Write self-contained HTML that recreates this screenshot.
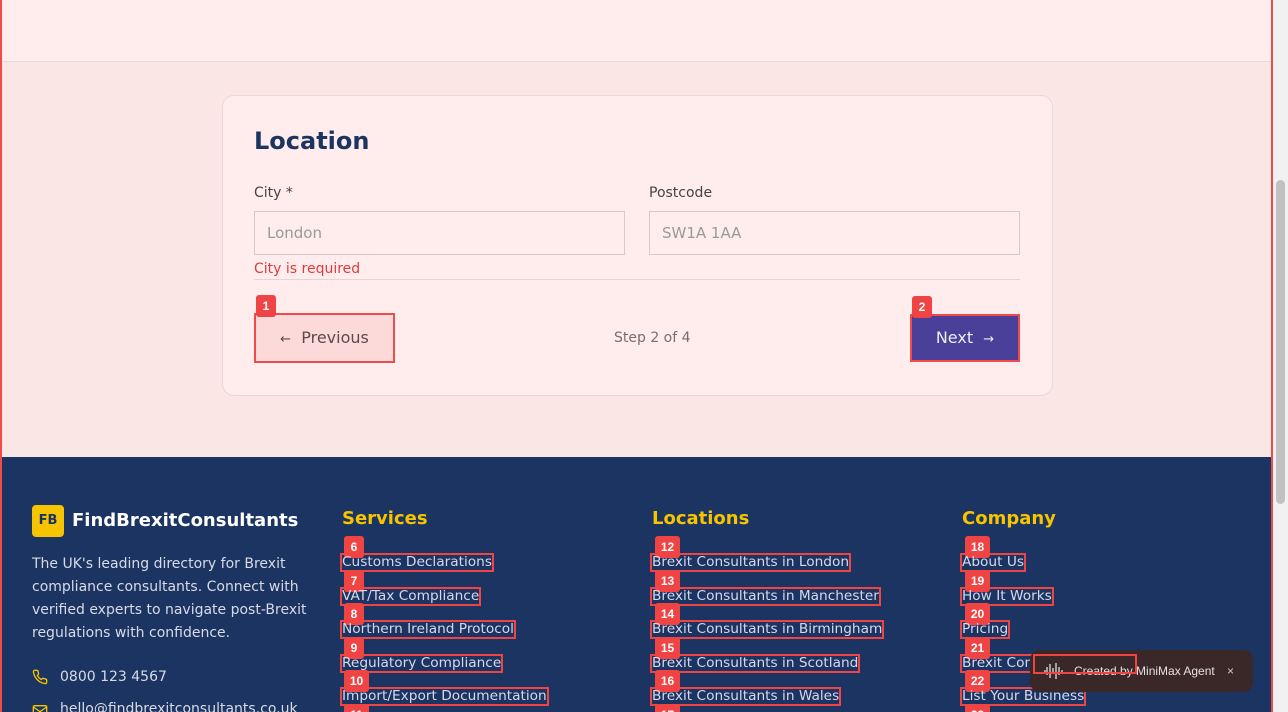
<!DOCTYPE html>
<html><head><style>
*{box-sizing:border-box;margin:0;padding:0}
html,body{width:1288px;height:712px;overflow:hidden}
body{font-family:"DejaVu Sans","Liberation Sans",sans-serif;background:#fbe6e6;position:relative}
.abs{position:absolute}
.top{left:0;top:0;width:1273px;height:62px;background:#ffecec;border-bottom:1px solid #f0d6d6}
.frame{left:0;top:0;width:1273px;height:712px;border-left:2px solid #f04a4a;border-right:2px solid #f04a4a;pointer-events:none;z-index:9}
.sb{left:1273px;top:0;width:15px;height:712px;background:#f1f1f1}
.thumb{left:1276px;top:180px;width:9px;height:324px;background:#c1c1c1;border-radius:5px}
.card{left:222px;top:95px;width:831px;height:301px;background:#ffecec;border:1px solid #efd5d5;border-radius:12px}
h2{position:absolute;left:254px;top:127px;font-size:24px;color:#1b3461;font-weight:bold}
.lbl{font-size:14px;color:#444}
.inp{height:44px;width:371px;border:1px solid #d6c9c9;background:#ffecec;font-size:15px;color:#9a9a9a;padding:12px 12px}
.badge{background:#f04444;color:#fff;font-size:12px;font-weight:bold;border-radius:3px;text-align:center;line-height:22px;height:22px;font-family:"Liberation Sans",sans-serif}
.footer{left:0;top:457px;width:1273px;height:255px;background:#1b3461;overflow:hidden}
.fh{font-size:18px;font-weight:bold;color:#f6c400}
.lnk{font-size:13.7px;color:#d8d8ec;outline:2px solid #f04444;line-height:15px;padding:0;white-space:nowrap}
.ft{color:#d8dbe6;font-size:14px}
</style></head><body>
<div class="abs top"></div>
<div class="abs card"></div>
<h2>Location</h2>
<div class="abs lbl" style="left:254px;top:185px">City *</div>
<div class="abs lbl" style="left:649px;top:185px">Postcode</div>
<div class="abs inp" style="left:254px;top:211px">London</div>
<div class="abs inp" style="left:649px;top:211px">SW1A 1AA</div>
<div class="abs" style="left:254px;top:261px;font-size:14px;color:#e03b3b">City is required</div>
<div class="abs" style="left:254px;top:279px;width:766px;height:1px;background:#e8d2d2"></div>
<div class="abs" style="left:254px;top:313px;width:141px;height:50px;background:#fddada;border:2px solid #f04a4a;color:#5a4a4a;font-size:16px;line-height:46px;text-align:center"><span style="font-size:13px">←</span>&nbsp; Previous</div>
<div class="abs badge" style="left:256px;top:295px;width:20px">1</div>
<div class="abs" style="left:614px;top:330px;font-size:14px;color:#7a6d6d">Step 2 of 4</div>
<div class="abs" style="left:910px;top:314px;width:110px;height:48px;background:#4a3f99;border:2px solid #f04a4a;color:#eee;font-size:16px;line-height:44px;text-align:center">Next &nbsp;<span style="font-size:13px">→</span></div>
<div class="abs badge" style="left:912px;top:296px;width:20px">2</div>

<div class="abs footer">
<div class="abs" style="left:32px;top:48px;width:32px;height:32px;background:#f6c400;border-radius:4px;color:#1b3461;font-weight:bold;font-size:13px;line-height:32px;text-align:center">FB</div>
<div class="abs" style="left:72px;top:53px;font-size:18px;font-weight:bold;color:#fff">FindBrexitConsultants</div>
<div class="abs ft" style="left:32px;top:96px;width:290px;line-height:23px">The UK's leading directory for Brexit compliance consultants. Connect with verified experts to navigate post-Brexit regulations with confidence.</div>
<svg class="abs" style="left:32px;top:212px" width="16" height="16" viewBox="0 0 24 24" fill="none" stroke="#f6c400" stroke-width="2"><path d="M22 16.9v3a2 2 0 0 1-2.2 2 19.8 19.8 0 0 1-8.6-3.1 19.5 19.5 0 0 1-6-6A19.8 19.8 0 0 1 2.1 4.2 2 2 0 0 1 4.1 2h3a2 2 0 0 1 2 1.7c.1 1 .4 1.9.7 2.8a2 2 0 0 1-.5 2.1L8 9.9a16 16 0 0 0 6 6l1.3-1.3a2 2 0 0 1 2.1-.4c.9.3 1.8.6 2.8.7a2 2 0 0 1 1.7 2z"/></svg>
<div class="abs ft" style="left:60px;top:212px">0800 123 4567</div>
<svg class="abs" style="left:32px;top:246px" width="16" height="16" viewBox="0 0 24 24" fill="none" stroke="#f6c400" stroke-width="2"><rect x="2" y="4" width="20" height="16" rx="2"/><path d="M2 6l10 7 10-7"/></svg>
<div class="abs ft" style="left:60px;top:244px">hello@findbrexitconsultants.co.uk</div>
</div>

<div class="abs fh" style="left:342px;top:508px">Services</div>
<div class="abs fh" style="left:652px;top:508px">Locations</div>
<div class="abs fh" style="left:962px;top:508px">Company</div>

<div class="abs badge" style="left:344px;top:536px;width:20px">6</div><div class="abs lnk" style="left:342px;top:555px">Customs Declarations</div>
<div class="abs badge" style="left:344px;top:570px;width:20px">7</div><div class="abs lnk" style="left:342px;top:589px">VAT/Tax Compliance</div>
<div class="abs badge" style="left:344px;top:603px;width:20px">8</div><div class="abs lnk" style="left:342px;top:622px">Northern Ireland Protocol</div>
<div class="abs badge" style="left:344px;top:637px;width:20px">9</div><div class="abs lnk" style="left:342px;top:656px">Regulatory Compliance</div>
<div class="abs badge" style="left:344px;top:670px;width:25px">10</div><div class="abs lnk" style="left:342px;top:689px">Import/Export Documentation</div>
<div class="abs badge" style="left:344px;top:704px;width:25px">11</div>

<div class="abs badge" style="left:655px;top:536px;width:25px">12</div><div class="abs lnk" style="left:652px;top:555px">Brexit Consultants in London</div>
<div class="abs badge" style="left:655px;top:570px;width:25px">13</div><div class="abs lnk" style="left:652px;top:589px">Brexit Consultants in Manchester</div>
<div class="abs badge" style="left:655px;top:603px;width:25px">14</div><div class="abs lnk" style="left:652px;top:622px">Brexit Consultants in Birmingham</div>
<div class="abs badge" style="left:655px;top:637px;width:25px">15</div><div class="abs lnk" style="left:652px;top:656px">Brexit Consultants in Scotland</div>
<div class="abs badge" style="left:655px;top:670px;width:25px">16</div><div class="abs lnk" style="left:652px;top:689px">Brexit Consultants in Wales</div>
<div class="abs badge" style="left:655px;top:704px;width:25px">17</div>

<div class="abs badge" style="left:965px;top:536px;width:25px">18</div><div class="abs lnk" style="left:962px;top:555px">About Us</div>
<div class="abs badge" style="left:965px;top:570px;width:25px">19</div><div class="abs lnk" style="left:962px;top:589px">How It Works</div>
<div class="abs badge" style="left:965px;top:603px;width:25px">20</div><div class="abs lnk" style="left:962px;top:622px">Pricing</div>
<div class="abs badge" style="left:965px;top:637px;width:25px">21</div><div class="abs lnk" style="left:962px;top:656px;width:172px;overflow:hidden">Brexit Consultants</div>
<div class="abs badge" style="left:965px;top:670px;width:25px">22</div><div class="abs lnk" style="left:962px;top:689px">List Your Business</div>
<div class="abs badge" style="left:965px;top:704px;width:25px">23</div>

<div class="abs" style="left:1030px;top:650px;width:223px;height:42px;background:#3a2828;border-radius:10px;color:#e8e0e0;font-size:12px;font-family:'Liberation Sans',sans-serif;line-height:42px;padding-left:44px;z-index:5">Created by MiniMax Agent<span style="position:absolute;left:197px;color:#ccc">×</span>
<svg style="position:absolute;left:13px;top:11px" width="22" height="20" viewBox="0 0 22 20" fill="none" stroke="#ddd" stroke-width="1.3"><path d="M1 10h2M4 6v8M7 3v14M10 7v6M13 2v16M16 6v8M19 9v2"/></svg></div>
<div class="abs" style="left:1035px;top:656px;width:100px;height:16px;outline:2px solid #f04444;z-index:6"></div>

<div class="abs sb"></div><div class="abs thumb"></div>
<div class="abs frame"></div>
</body></html>
